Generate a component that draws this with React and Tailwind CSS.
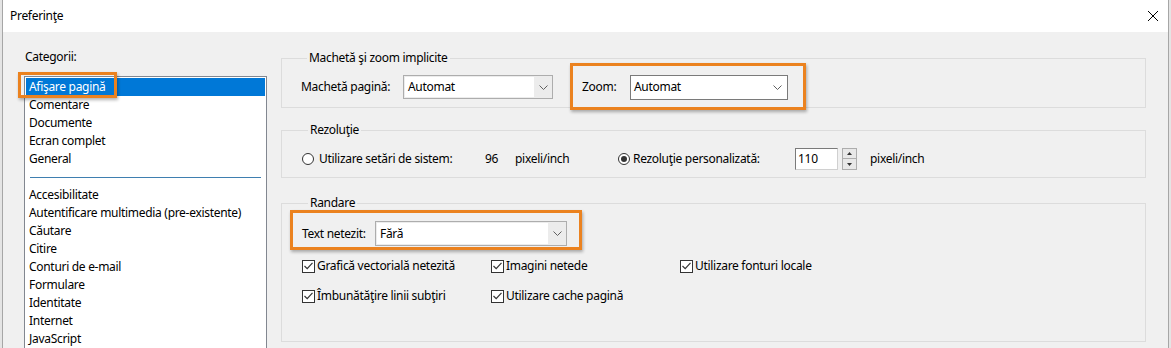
import React from "react";

const categoriesTop = ["Afişare pagină", "Comentare", "Documente", "Ecran complet", "General"];
const categoriesBottom = [
  "Accesibilitate",
  "Autentificare multimedia (pre-existente)",
  "Căutare",
  "Citire",
  "Conturi de e-mail",
  "Formulare",
  "Identitate",
  "Internet",
  "JavaScript",
];

function Chevron() {
  return (
    <svg width="9" height="5" viewBox="0 0 9 5" fill="none">
      <path d="M0.5 0.5 L4.5 4.5 L8.5 0.5" stroke="#606060" strokeWidth="1" />
    </svg>
  );
}

// Windows read-only combo: white text field + grey arrow strip
function Combo({ value, width }) {
  return (
    <div className={`flex h-[24px] border border-[#adadad] bg-[#ececec] ${width}`}>
      <div className="m-[1px] flex flex-1 items-center bg-white pl-[3px]">{value}</div>
      <div className="flex w-[17px] items-center justify-center">
        <Chevron />
      </div>
    </div>
  );
}

function Radio({ checked }) {
  return (
    <span className="flex h-[12px] w-[12px] items-center justify-center rounded-full border border-[#333] bg-white">
      {checked && <span className="h-[6px] w-[6px] rounded-full bg-[#333]" />}
    </span>
  );
}

function Check({ label }) {
  return (
    <div className="flex items-center gap-[2px]">
      <span className="flex h-[13px] w-[13px] items-center justify-center border border-[#333] bg-white">
        <svg width="9" height="8" viewBox="0 0 9 8" fill="none">
          <path d="M0.5 4 L3.2 6.7 L8.5 0.8" stroke="#333" strokeWidth="1.2" />
        </svg>
      </span>
      <span>{label}</span>
    </div>
  );
}

function Highlight({ className }) {
  return (
    <span
      className={`pointer-events-none absolute border-[3px] border-[#eb821f] shadow-[1px_2px_3px_rgba(0,0,0,0.3)] ${className}`}
    />
  );
}

function Group({ title, className, children }) {
  return (
    <fieldset className={`border border-[#dcdcdc] ${className}`}>
      <legend className="ml-[6px] px-[2px] leading-[16px]">{title}</legend>
      {children}
    </fieldset>
  );
}

export default function App() {
  return (
    <div className="flex h-[348px] w-[1171px] overflow-hidden bg-[#e4e4e4] font-['Noto_Sans',sans-serif] text-[12px] leading-[16px] tracking-[-0.3px] text-black">
      <div className="ml-[2px] flex w-[1167px] flex-col border-x border-[#a6a6a6]">
        {/* Title bar */}
        <div className="flex h-[32px] shrink-0 items-center justify-between bg-white pl-[7px] pr-[10px]">
          <span>Preferinţe</span>
          <svg width="10" height="10" viewBox="0 0 10 10" fill="none">
            <path d="M0 0 L10 10 M10 0 L0 10" stroke="#000" strokeWidth="1" />
          </svg>
        </div>

        <div className="flex flex-1 bg-[#f0f0f0]">
          {/* Categories */}
          <div className="w-[278px] shrink-0 pl-[21px] pt-[17px]">
            <div className="pl-[1px]">Categorii:</div>
            <div className="relative mt-[11px] h-[300px] w-[243px] border border-[#828790] bg-white p-[1px]">
              {categoriesTop.map((c, i) => (
                <div
                  key={c}
                  className={`h-[18px] pl-[3px] leading-[18px] ${i === 0 ? "bg-[#0078d7] text-white" : ""}`}
                >
                  {c}
                </div>
              ))}
              <div className="flex h-[18px] items-center px-[4px]">
                <div className="h-px w-full bg-[#3f7fb0]" />
              </div>
              {categoriesBottom.map((c) => (
                <div key={c} className="h-[18px] pl-[3px] leading-[18px]">
                  {c}
                </div>
              ))}
              <Highlight className="left-[-7px] top-[-5px] h-[26px] w-[99px]" />
            </div>
          </div>

          {/* Settings */}
          <div className="flex w-[865px] flex-col">
            <Group title="Machetă şi zoom implicite" className="mt-[18px] px-[19px] pb-[7px] pt-[8px]">
              <div className="flex h-[26px] items-center">
                <span className="w-[102px]">Machetă pagină:</span>
                <Combo value="Automat" width="w-[150px]" />
                <div className="relative ml-[29px] flex h-[26px] items-center">
                  <span className="w-[48px]">Zoom:</span>
                  <div className="flex h-[25px] w-[158px] items-center justify-between border border-[#7a7a7a] bg-white pl-[3px] pr-[5px]">
                    <span>Automat</span>
                    <Chevron />
                  </div>
                  <Highlight className="bottom-[-10px] left-[-12px] right-[-18px] top-[-11px]" />
                </div>
              </div>
            </Group>

            <Group title="Rezoluţie" className="mt-[14px] pb-[6px] pl-[20px] pt-[9px]">
              <div className="flex h-[24px] items-center">
                <div className="flex w-[183px] items-center gap-[5px]">
                  <Radio />
                  <span>Utilizare setări de sistem:</span>
                </div>
                <span className="w-[30px]">96</span>
                <span className="w-[103px]">pixeli/inch</span>
                <div className="flex w-[177px] items-center gap-[3px]">
                  <Radio checked />
                  <span>Rezoluţie personalizată:</span>
                </div>
                <div className="flex h-[22px] w-[43px] items-center border border-[#7a7a7a] border-b-[#d0d0d0] border-r-[#d0d0d0] bg-white pl-[2px]">
                  110
                </div>
                <div className="ml-[4px] flex h-[22px] w-[15px] flex-col">
                  <div className="flex h-[11px] items-center justify-center border border-[#adadad] bg-[#e8e8e8]">
                    <svg width="5" height="3" viewBox="0 0 5 3">
                      <path d="M0 3 L2.5 0 L5 3 Z" fill="#333" />
                    </svg>
                  </div>
                  <div className="flex h-[11px] items-center justify-center border border-t-0 border-[#adadad] bg-[#e8e8e8]">
                    <svg width="5" height="3" viewBox="0 0 5 3">
                      <path d="M0 0 L2.5 3 L5 0 Z" fill="#333" />
                    </svg>
                  </div>
                </div>
                <span className="ml-[13px]">pixeli/inch</span>
              </div>
            </Group>

            <Group title="Randare" className="mt-[17px] pb-[37px] pl-[20px] pt-[10px]">
              <div className="relative flex h-[25px] w-fit items-center">
                <span className="w-[73px]">Text netezit:</span>
                <Combo value="Fără" width="w-[192px] h-[25px]" />
                <Highlight className="bottom-[-4px] left-[-12px] right-[-15px] top-[-11px]" />
              </div>
              <div className="mt-[12px] flex h-[16px] items-center">
                <div className="w-[189px]">
                  <Check label="Grafică vectorială netezită" />
                </div>
                <div className="w-[189px]">
                  <Check label="Imagini netede" />
                </div>
                <Check label="Utilizare fonturi locale" />
              </div>
              <div className="mt-[14px] flex h-[16px] items-center">
                <div className="w-[189px]">
                  <Check label="Îmbunătăţire linii subţiri" />
                </div>
                <Check label="Utilizare cache pagină" />
              </div>
            </Group>
          </div>
        </div>
      </div>
    </div>
  );
}
